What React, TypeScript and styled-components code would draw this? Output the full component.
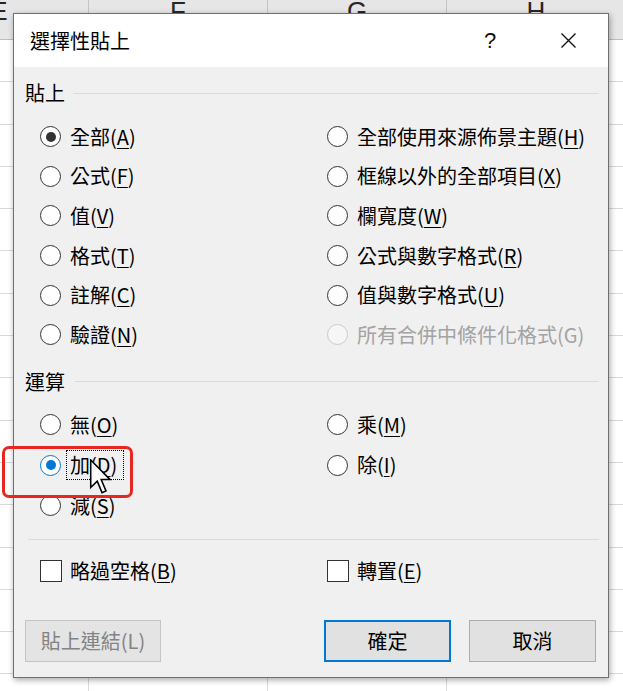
import React from 'react';
import styled, { createGlobalStyle } from 'styled-components';

const Global = createGlobalStyle`
  html, body { margin: 0; padding: 0; background: #fff; }
  body { font-family: "Noto Sans CJK TC", "Noto Sans", sans-serif; }
`;

const Screen = styled.div`
  position: relative;
  width: 623px;
  height: 691px;
  overflow: hidden;
  background: #fff;
`;

/* ---------- spreadsheet behind the dialog ---------- */
const Sheet = styled.div`
  margin-left: -90px;
  width: 716px;
`;

const HeaderRow = styled.div`
  display: grid;
  grid-template-columns: repeat(4, 179px);
  height: 40px;
  box-sizing: border-box;
  background: #e6e6e6;
  border-bottom: 1px solid #bdbdbd;
`;

const HeaderCell = styled.div`
  display: flex;
  justify-content: center;
  align-items: flex-start;
  box-sizing: border-box;
  border-right: 1px solid #c4c4c4;
  font-family: "Liberation Sans", Arial, sans-serif;
  font-size: 26px;
  line-height: 26px;
  color: #262626;
  overflow: hidden;
`;

const HeaderLetter = styled.span`
  margin-top: -2px;
`;

const CellGrid = styled.div`
  display: grid;
  grid-template-columns: repeat(4, 179px);
  grid-auto-rows: 42.3px;
`;

const Cell = styled.div`
  box-sizing: border-box;
  border-right: 1px solid #d9d9d9;
  border-bottom: 1px solid #d9d9d9;
`;

/* ---------- dialog ---------- */
const Dialog = styled.div`
  position: absolute;
  left: 13px;
  top: 13px;
  width: 596px;
  height: 665px;
  box-sizing: border-box;
  border: 1px solid #707070;
  background: #f0f0f0;
  box-shadow: 1px 2px 6px rgba(0, 0, 0, 0.35);
  display: flex;
  flex-direction: column;
  font-family: "Noto Sans CJK TC", "Noto Sans", sans-serif;
  color: #000;
`;

const TitleBar = styled.div`
  height: 53px;
  flex: none;
  background: #fff;
  display: flex;
  align-items: center;
  padding-left: 16px;
`;

const Title = styled.div`
  flex: 1;
  font-size: 20px;
  line-height: 24px;
`;

const TitleButton = styled.div<{ $w: number }>`
  width: ${(p) => p.$w}px;
  height: 100%;
  display: flex;
  align-items: center;
  justify-content: center;
  font-family: "Liberation Sans", Arial, sans-serif;
  font-size: 22px;
  color: #111;
`;

const Body = styled.div`
  flex: 1;
  display: flex;
  flex-direction: column;
  padding: 14px 9px 15px 11px;
`;

const SectionHeader = styled.div<{ $mt: number; $gap: number }>`
  display: flex;
  align-items: center;
  gap: ${(p) => p.$gap}px;
  height: 24px;
  margin-top: ${(p) => p.$mt}px;
`;

const SectionLabel = styled.span`
  font-size: 20px;
  line-height: 24px;
`;

const Rule = styled.div<{ $ml?: number; $mt?: number }>`
  flex: 1;
  height: 1px;
  min-height: 1px;
  background: #dadada;
  margin-left: ${(p) => p.$ml ?? 0}px;
  margin-top: ${(p) => p.$mt ?? 0}px;
`;

const Separator = styled(Rule)`
  flex: none;
`;

const OptionGrid = styled.div<{ $mt: number; $row: number }>`
  display: grid;
  grid-template-columns: 287px 1fr;
  grid-auto-rows: ${(p) => p.$row}px;
  padding-left: 15px;
  margin-top: ${(p) => p.$mt}px;
`;

const Option = styled.label<{ $disabled?: boolean; $gap: number }>`
  display: flex;
  align-items: center;
  gap: ${(p) => p.$gap}px;
  font-size: 20px;
  line-height: 24px;
  white-space: nowrap;
  color: ${(p) => (p.$disabled ? '#a3a3a3' : '#000')};
`;

const RadioCircle = styled.span<{ $state: 'off' | 'on' | 'blue' | 'disabled' }>`
  width: 21px;
  height: 21px;
  flex: none;
  box-sizing: border-box;
  border-radius: 50%;
  border: 1.5px solid
    ${(p) => (p.$state === 'blue' ? '#0078d7' : p.$state === 'disabled' ? '#cbcbcb' : '#333')};
  background: ${(p) => (p.$state === 'disabled' ? '#f6f6f6' : '#fff')};
  display: flex;
  align-items: center;
  justify-content: center;

  &::after {
    content: '';
    width: 10px;
    height: 10px;
    border-radius: 50%;
    background: ${(p) => (p.$state === 'blue' ? '#0078d7' : '#333')};
    display: ${(p) => (p.$state === 'on' || p.$state === 'blue' ? 'block' : 'none')};
  }
`;

const CheckBox = styled.span`
  width: 22px;
  height: 22px;
  flex: none;
  box-sizing: border-box;
  border: 1.5px solid #333;
  background: #fff;
`;

const Key = styled.span`
  text-decoration: underline;
  text-decoration-thickness: 1px;
  text-underline-offset: 3px;
`;

const FocusText = styled.span`
  border: 1px dotted #000;
  padding: 2px 6px 2px 3px;
  margin: -3px -7px -3px -4px;
`;

const Footer = styled.div`
  margin-top: auto;
  display: flex;
  align-items: center;
  padding-right: 3px;
`;

const Spacer = styled.div`
  flex: 1;
`;

const Button = styled.button<{ $w: number; $variant: 'disabled' | 'default' | 'normal' }>`
  width: ${(p) => p.$w}px;
  height: 42px;
  box-sizing: border-box;
  font-family: inherit;
  font-size: 20px;
  line-height: 24px;
  padding: 0;
  margin-left: ${(p) => (p.$variant === 'normal' ? 18 : 0)}px;
  background: ${(p) => (p.$variant === 'disabled' ? '#e4e4e4' : '#e1e1e1')};
  color: ${(p) => (p.$variant === 'disabled' ? '#838383' : '#000')};
  border: ${(p) =>
    p.$variant === 'default'
      ? '2px solid #0078d7'
      : p.$variant === 'disabled'
      ? '1px solid #c4c4c4'
      : '1px solid #adadad'};
`;

/* ---------- overlays ---------- */
const Highlight = styled.div`
  position: absolute;
  left: 2px;
  top: 446px;
  width: 131px;
  height: 52px;
  box-sizing: border-box;
  border: 3px solid #e8261f;
  border-radius: 7px;
  pointer-events: none;
`;

const Cursor = styled.svg`
  position: absolute;
  left: 89px;
  top: 459px;
`;

type Opt = { text: string; key: string; state?: 'off' | 'on' | 'blue' | 'disabled'; focus?: boolean; noUnderline?: boolean };

const RadioOption: React.FC<{ o: Opt }> = ({ o }) => {
  const state = o.state ?? 'off';
  const content = (
    <>
      {o.text}(
      {o.noUnderline ? o.key : <Key>{o.key}</Key>})
    </>
  );
  return (
    <Option $gap={9} $disabled={state === 'disabled'}>
      <RadioCircle $state={state} />
      {o.focus ? <FocusText>{content}</FocusText> : <span>{content}</span>}
    </Option>
  );
};

const pasteOptions: Opt[] = [
  { text: '全部', key: 'A', state: 'on' },
  { text: '全部使用來源佈景主題', key: 'H' },
  { text: '公式', key: 'F' },
  { text: '框線以外的全部項目', key: 'X' },
  { text: '值', key: 'V' },
  { text: '欄寬度', key: 'W' },
  { text: '格式', key: 'T' },
  { text: '公式與數字格式', key: 'R' },
  { text: '註解', key: 'C' },
  { text: '值與數字格式', key: 'U' },
  { text: '驗證', key: 'N' },
  { text: '所有合併中條件化格式', key: 'G', state: 'disabled', noUnderline: true },
];

const opOptions: Opt[] = [
  { text: '無', key: 'O' },
  { text: '乘', key: 'M' },
  { text: '加', key: 'D', state: 'blue', focus: true },
  { text: '除', key: 'I' },
  { text: '減', key: 'S' },
];

const App: React.FC = () => {
  const cols = ['E', 'F', 'G', 'H'];
  const cells = Array.from({ length: 16 * 4 });
  return (
    <>
      <Global />
      <Screen>
        <Sheet>
          <HeaderRow>
            {cols.map((c) => (
              <HeaderCell key={c}>
                <HeaderLetter>{c}</HeaderLetter>
              </HeaderCell>
            ))}
          </HeaderRow>
          <CellGrid>
            {cells.map((_, i) => (
              <Cell key={i} />
            ))}
          </CellGrid>
        </Sheet>

        <Dialog>
          <TitleBar>
            <Title>選擇性貼上</Title>
            <TitleButton $w={76}>?</TitleButton>
            <TitleButton $w={80}>
              <svg width="17" height="17" viewBox="0 0 17 17">
                <path d="M1.5 1.5 L15.5 15.5 M15.5 1.5 L1.5 15.5" stroke="#111" strokeWidth="1.4" fill="none" />
              </svg>
            </TitleButton>
          </TitleBar>
          <Body>
            <SectionHeader $mt={0} $gap={8}>
              <SectionLabel>貼上</SectionLabel>
              <Rule />
            </SectionHeader>
            <OptionGrid $mt={12} $row={39.6}>
              {pasteOptions.map((o) => (
                <RadioOption key={o.text} o={o} />
              ))}
            </OptionGrid>

            <SectionHeader $mt={15} $gap={10}>
              <SectionLabel>運算</SectionLabel>
              <Rule />
            </SectionHeader>
            <OptionGrid $mt={11} $row={40.5}>
              {opOptions.map((o) => (
                <RadioOption key={o.text} o={o} />
              ))}
            </OptionGrid>

            <Separator $ml={3} $mt={12.5} />

            <OptionGrid $mt={11} $row={40}>
              <Option $gap={8}>
                <CheckBox />
                <span>
                  略過空格(<Key>B</Key>)
                </span>
              </Option>
              <Option $gap={8}>
                <CheckBox />
                <span>
                  轉置(<Key>E</Key>)
                </span>
              </Option>
            </OptionGrid>

            <Footer>
              <Button $w={136} $variant="disabled">貼上連結(L)</Button>
              <Spacer />
              <Button $w={127} $variant="default">確定</Button>
              <Button $w={127} $variant="normal">取消</Button>
            </Footer>
          </Body>
        </Dialog>

        <Highlight />
        <Cursor width="23" height="35" viewBox="-0.6 -0.6 12.6 20.4">
          <path
            d="M0 0 L0 16 L3.8 12.3 L6.6 19 L8.9 18 L6.1 11.4 L11.3 11.4 Z"
            fill="#fff"
            stroke="#000"
            strokeWidth="0.9"
            strokeLinejoin="miter"
          />
        </Cursor>
      </Screen>
    </>
  );
};

export default App;
